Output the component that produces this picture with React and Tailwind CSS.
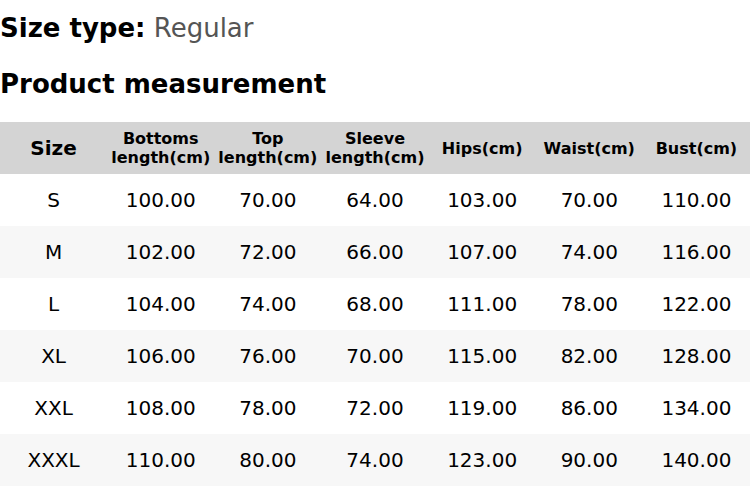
const headers = [
  ["Bottoms", "length(cm)"],
  ["Top", "length(cm)"],
  ["Sleeve", "length(cm)"],
  ["Hips(cm)"],
  ["Waist(cm)"],
  ["Bust(cm)"],
];

const rows = [
  ["S", "100.00", "70.00", "64.00", "103.00", "70.00", "110.00"],
  ["M", "102.00", "72.00", "66.00", "107.00", "74.00", "116.00"],
  ["L", "104.00", "74.00", "68.00", "111.00", "78.00", "122.00"],
  ["XL", "106.00", "76.00", "70.00", "115.00", "82.00", "128.00"],
  ["XXL", "108.00", "78.00", "72.00", "119.00", "86.00", "134.00"],
  ["XXXL", "110.00", "80.00", "74.00", "123.00", "90.00", "140.00"],
];

function App() {
  return (
    <div className="w-[750px] bg-white text-black" style={{ fontFamily: '"DejaVu Sans", sans-serif' }}>
      <div className="pt-[13px] text-[26px] leading-[30px]">
        <span className="font-bold">Size type:</span>{" "}
        <span className="text-[#555555]">Regular</span>
      </div>
      <div className="mt-[26px] text-[26px] leading-[30px] font-bold">Product measurement</div>
      <div className="mt-[23px]">
        <div className="grid grid-cols-7 h-[52px] bg-[#d4d4d4] items-center text-center font-bold">
          <div className="text-[20px]">Size</div>
          {headers.map((h, i) => (
            <div key={i} className="text-[16px] leading-[19px]">
              {h.map((line, j) => (
                <div key={j} className="whitespace-nowrap">{line}</div>
              ))}
            </div>
          ))}
        </div>
        {rows.map((r, i) => (
          <div
            key={i}
            className={`grid grid-cols-7 h-[52px] items-center text-center text-[20px] ${i % 2 === 1 ? "bg-[#f7f7f7]" : "bg-white"}`}
          >
            {r.map((c, j) => (
              <div key={j}>{c}</div>
            ))}
          </div>
        ))}
      </div>
    </div>
  );
}

export default App;
